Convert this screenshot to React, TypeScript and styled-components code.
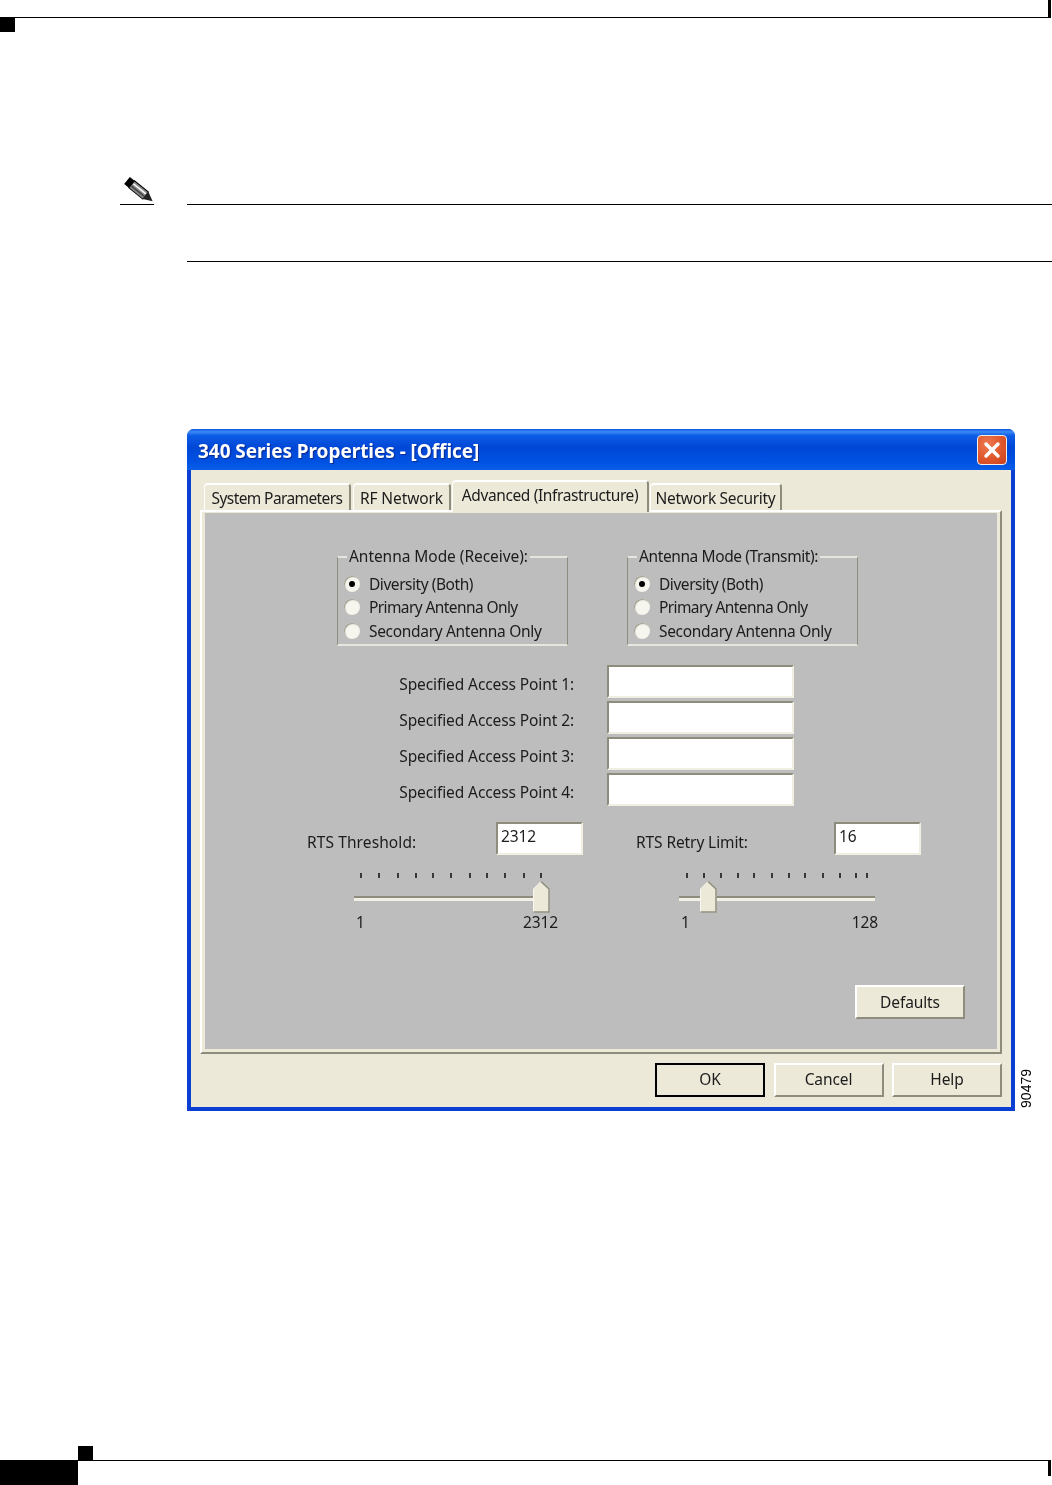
import React from 'react';
import styled, { createGlobalStyle } from 'styled-components';
import { X } from 'lucide-react';

const GlobalStyle = createGlobalStyle`
    html, body {
        margin: 0;
        padding: 0;
        background: #ffffff;
    }
    * {
        box-sizing: border-box;
    }
`;

const Page = styled.div`
    width: 1052px;
    height: 1485px;
    display: flex;
    flex-direction: column;
    overflow: hidden;
    background: #ffffff;
    font-family: "Noto Sans", "Liberation Sans", sans-serif;
    color: #1c1c1c;
`;

const TopBar = styled.div`
    display: flex;
    height: 33px;
    flex-shrink: 0;
`;

const TopMark = styled.div`
    width: 15px;
    height: 15px;
    margin-top: 17px;
    background: #000000;
`;

const TopRule = styled.div`
    flex: 1;
    height: 18px;
    margin-right: 1px;
    border-bottom: 1px solid #000000;
    border-right: 3px solid #000000;
`;

const NoteRow = styled.div`
    display: flex;
    margin: 144px 0 0 120px;
`;

const NoteIcon = styled.div`
    width: 34px;
    height: 28px;
    flex-shrink: 0;
    border-bottom: 1px solid #000000;
`;

const NoteBody = styled.div`
    flex: 1;
    height: 58px;
    margin: 27px 0 0 33px;
    border-top: 1px solid #000000;
    border-bottom: 1px solid #000000;
`;

const Figure = styled.div`
    display: flex;
    margin: 167px 0 0 187px;
`;

const Dialog = styled.div`
    width: 828px;
    height: 682px;
    display: flex;
    flex-direction: column;
    flex-shrink: 0;
    padding: 0 4px 4px;
    border-radius: 7px 7px 0 0;
    background: #0a3fd2;
    filter: blur(0.45px);
`;

const TitleBar = styled.div`
    height: 41px;
    margin: 0 -4px;
    padding: 3px 8px 0 11px;
    display: flex;
    align-items: center;
    justify-content: space-between;
    flex-shrink: 0;
    border-radius: 7px 7px 0 0;
    background: linear-gradient(180deg, #0a55e4 0%, #3d8bf5 7%, #0d5ce6 16%, #0047d6 45%, #0051e2 80%, #0a5ee8 100%);
`;

const TitleText = styled.span`
    font-family: "Noto Sans", sans-serif;
    font-weight: 700;
    font-size: 19px;
    letter-spacing: -0.05px;
    color: #ffffff;
    text-shadow: 1px 1px 1px #0a2a90;
`;

const CloseButton = styled.div`
    width: 30px;
    height: 30px;
    margin-top: -3px;
    display: flex;
    align-items: center;
    justify-content: center;
    border: 1px solid #f4efe8;
    border-radius: 4px;
    color: #ffffff;
    background: radial-gradient(circle at 35% 30%, #ee7a50 0%, #e0562c 55%, #c9401c 100%);
`;

const Body = styled.div`
    flex: 1;
    display: flex;
    flex-direction: column;
    padding: 0 9px;
    background: #ece9d8;
`;

const TabStrip = styled.div`
    height: 40px;
    flex-shrink: 0;
    display: flex;
    align-items: flex-start;
    padding-left: 4px;
`;

const Tab = styled.div<{ $width: number; $active?: boolean; $gap?: number; $track: number }>`
    position: relative;
    z-index: ${(props) => (props.$active ? 2 : 1)};
    width: ${(props) => props.$width}px;
    height: ${(props) => (props.$active ? 32 : 27)}px;
    margin-top: ${(props) => (props.$active ? 10 : 13)}px;
    margin-right: ${(props) => props.$gap ?? 0}px;
    display: flex;
    align-items: center;
    justify-content: center;
    padding-bottom: ${(props) => (props.$active ? 4 : 0)}px;
    font-size: 15.5px;
    letter-spacing: ${(props) => props.$track}px;
    white-space: nowrap;
    background: #ece9d8;
    border-top: 2px solid #ffffff;
    border-left: 1px solid #ffffff;
    border-right: 2px solid #8e8c7c;
    border-radius: 4px 4px 0 0;
`;

const Panel = styled.div`
    height: 544px;
    flex-shrink: 0;
    display: flex;
    padding: 1px 3px 3px;
    background: #ece9d8;
    border-top: 2px solid #ffffff;
    border-left: 2px solid #ffffff;
    border-right: 2px solid #8e8c7c;
    border-bottom: 2px solid #8e8c7c;
`;

const PanelInner = styled.div`
    flex: 1;
    display: flex;
    flex-direction: column;
    padding-top: 43px;
    padding-bottom: 30px;
    background: #bdbdbd;
    font-size: 15.5px;
    letter-spacing: -0.1px;
`;

const GroupRow = styled.div`
    display: flex;
    gap: 59px;
    padding-left: 132px;
`;

const GroupBox = styled.div`
    position: relative;
    width: 231px;
    height: 90px;
    padding: 14px 0 0 6px;
    border-top: 2px solid #e6e6de;
    border-left: 1.5px solid #8e8c7c;
    border-right: 1.5px solid #8e8c7c;
    border-bottom: 2px solid #e6e6de;
`;

const GroupTitle = styled.span<{ $track: number }>`
    position: absolute;
    top: -12px;
    left: 9px;
    padding: 0 2px;
    line-height: 20px;
    letter-spacing: ${(props) => props.$track}px;
    background: #bdbdbd;
    white-space: nowrap;
`;

const RadioRow = styled.div<{ $track: number }>`
    height: 23.5px;
    display: flex;
    align-items: center;
    gap: 9px;
    letter-spacing: ${(props) => props.$track}px;
    white-space: nowrap;
`;

const RadioDot = styled.span<{ $checked?: boolean }>`
    width: 16px;
    height: 16px;
    flex-shrink: 0;
    display: flex;
    align-items: center;
    justify-content: center;
    border-radius: 50%;
    background: #f6f5ee;
    box-shadow: inset 1px 1px 1px #9c9a8a;

    &::after {
        content: "";
        width: 6px;
        height: 6px;
        border-radius: 50%;
        background: ${(props) => (props.$checked ? '#000000' : 'transparent')};
    }
`;

const AccessGrid = styled.div`
    display: grid;
    grid-template-columns: 369px 187px;
    grid-auto-rows: 33px;
    column-gap: 33px;
    row-gap: 3px;
    margin-top: 19px;
    align-items: center;
`;

const AccessLabel = styled.span`
    padding-top: 5px;
    text-align: right;
    white-space: nowrap;
`;

const Field = styled.div<{ $width?: number }>`
    width: ${(props) => props.$width ?? 187}px;
    height: 33px;
    padding: 1px 0 0 3px;
    line-height: 22px;
    background: #ffffff;
    border-top: 2px solid #8e8c7c;
    border-left: 2px solid #8e8c7c;
    border-right: 2px solid #f1efe2;
    border-bottom: 2px solid #f1efe2;
`;

const RtsRow = styled.div`
    display: flex;
    margin-top: 16px;
    padding-left: 102px;
`;

const RtsBlock = styled.div<{ $width: number }>`
    width: ${(props) => props.$width}px;
    flex-shrink: 0;
`;

const RtsHead = styled.div<{ $width: number }>`
    width: ${(props) => props.$width}px;
    display: flex;
    align-items: center;
    justify-content: space-between;
`;

const RtsLabel = styled.span<{ $track: number }>`
    padding-top: 6px;
    letter-spacing: ${(props) => props.$track}px;
    white-space: nowrap;
`;

const Slider = styled.div<{ $left: number; $width: number }>`
    position: relative;
    margin: 18px 0 0 ${(props) => props.$left}px;
    width: ${(props) => props.$width}px;
`;

const TickScale = styled.svg`
    display: block;
    height: 5px;
    width: 100%;
`;

const Track = styled.div`
    height: 5px;
    margin-top: 18px;
    background: #f2f0e4;
    border-top: 2px solid #8e8c7c;
`;

const Thumb = styled.svg<{ $at: number }>`
    position: absolute;
    top: 8px;
    left: ${(props) => props.$at}px;
`;

const ScaleLabels = styled.div<{ $left: number; $width: number }>`
    display: flex;
    justify-content: space-between;
    margin: 11px 0 0 ${(props) => props.$left}px;
    width: ${(props) => props.$width}px;
    line-height: 20px;
`;

const DefaultsRow = styled.div`
    display: flex;
    justify-content: flex-end;
    margin-top: auto;
    padding-right: 32px;
`;

const Button = styled.div<{ $primary?: boolean }>`
    width: 110px;
    height: 34px;
    display: flex;
    align-items: center;
    justify-content: center;
    padding-bottom: 1px;
    background: #ece9d8;
    font-size: 15.5px;
    letter-spacing: -0.1px;
    border-top: 2px solid ${(props) => (props.$primary ? '#000000' : '#ffffff')};
    border-left: 2px solid ${(props) => (props.$primary ? '#000000' : '#ffffff')};
    border-right: 2px solid ${(props) => (props.$primary ? '#000000' : '#8e8c7c')};
    border-bottom: 2px solid ${(props) => (props.$primary ? '#000000' : '#8e8c7c')};
`;

const ButtonRow = styled.div`
    display: flex;
    justify-content: flex-end;
    gap: 8.5px;
    padding-top: 9px;

    ${Button} {
        padding-bottom: 3px;
    }
`;

const FigureNumber = styled.span`
    align-self: flex-end;
    margin: 0 0 3px 4px;
    writing-mode: vertical-rl;
    transform: rotate(180deg);
    font-family: "Liberation Sans", sans-serif;
    font-size: 14px;
    line-height: 15px;
    color: #000000;
`;

const Footer = styled.div`
    margin-top: auto;
    display: grid;
    grid-template-columns: 78px 15px 1fr;
    grid-template-rows: 14px 25px;
`;

const FooterBlock = styled.div`
    grid-column: 1;
    grid-row: 2;
    background: #000000;
`;

const FooterMark = styled.div`
    grid-column: 2;
    grid-row: 1;
    background: #000000;
`;

const FooterRule = styled.div`
    grid-column: 2 / -1;
    grid-row: 2;
    height: 16px;
    margin-right: 1px;
    border-top: 1px solid #000000;
    border-right: 3px solid #000000;
`;

const PencilIcon = () => (
    <svg width="34" height="27" viewBox="0 0 34 27">
        <g transform="translate(7 3.5) rotate(39)">
            <rect x="0" y="-4.5" width="6" height="9" fill="#000000" />
            <rect x="6" y="-4.5" width="18" height="9" fill="#8a8a8a" stroke="#000000" strokeWidth="1" />
            <line x1="7" y1="-1.5" x2="23" y2="-1.5" stroke="#ffffff" strokeWidth="1.5" />
            <line x1="7" y1="1.5" x2="23" y2="1.5" stroke="#444444" strokeWidth="1.5" />
            <polygon points="24,-4.5 33,0 24,4.5" fill="#222222" />
        </g>
    </svg>
);

const RadioGroup = ({ title, titleTrack }: { title: string; titleTrack: number }) => (
    <GroupBox>
        <GroupTitle $track={titleTrack}>{title}</GroupTitle>
        <RadioRow $track={-0.45}><RadioDot $checked />Diversity (Both)</RadioRow>
        <RadioRow $track={-0.6}><RadioDot />Primary Antenna Only</RadioRow>
        <RadioRow $track={-0.32}><RadioDot />Secondary Antenna Only</RadioRow>
    </GroupBox>
);

interface RtsProps {
    label: string;
    labelTrack: number;
    value: string;
    width: number;
    headWidth: number;
    left: number;
    trackWidth: number;
    ticks: number[];
    thumbAt: number;
    labelLeft: number;
    labelWidth: number;
    max: string;
}

const RtsControl = ({ label, labelTrack, value, width, headWidth, left, trackWidth, ticks, thumbAt, labelLeft, labelWidth, max }: RtsProps) => (
    <RtsBlock $width={width}>
        <RtsHead $width={headWidth}>
            <RtsLabel $track={labelTrack}>{label}</RtsLabel>
            <Field $width={87}>{value}</Field>
        </RtsHead>
        <Slider $left={left} $width={trackWidth}>
            <TickScale>
                {ticks.map((x) => (
                    <line key={x} x1={x} x2={x} y1="0" y2="5" stroke="#000000" strokeWidth="1.4" />
                ))}
            </TickScale>
            <Track />
            <Thumb $at={thumbAt} width="17" height="32" viewBox="0 0 17 32">
                <polygon points="8,0.5 16,8 16,31 0.5,31 0.5,8" fill="#ece9d8" stroke="#f8f7ef" strokeWidth="1" />
                <polyline points="8,0.5 16,8 16,31 0.5,31" fill="none" stroke="#8e8c7c" strokeWidth="1.5" />
            </Thumb>
        </Slider>
        <ScaleLabels $left={labelLeft} $width={labelWidth}>
            <span>1</span>
            <span>{max}</span>
        </ScaleLabels>
    </RtsBlock>
);

const App = () => (
    <Page>
        <GlobalStyle />
        <TopBar>
            <TopMark />
            <TopRule />
        </TopBar>

        <NoteRow>
            <NoteIcon><PencilIcon /></NoteIcon>
            <NoteBody />
        </NoteRow>

        <Figure>
            <Dialog>
                <TitleBar>
                    <TitleText>340 Series Properties - [Office]</TitleText>
                    <CloseButton><X size={24} strokeWidth={3.4} /></CloseButton>
                </TitleBar>
                <Body>
                    <TabStrip>
                        <Tab $width={147} $gap={2} $track={-0.6}>System Parameters</Tab>
                        <Tab $width={98} $gap={1} $track={-0.1}>RF Network</Tab>
                        <Tab $width={197} $gap={1} $track={-0.38} $active>Advanced (Infrastructure)</Tab>
                        <Tab $width={132} $track={-0.3}>Network Security</Tab>
                    </TabStrip>
                    <Panel>
                        <PanelInner>
                            <GroupRow>
                                <RadioGroup title="Antenna Mode (Receive):" titleTrack={-0.05} />
                                <RadioGroup title="Antenna Mode (Transmit):" titleTrack={-0.4} />
                            </GroupRow>
                            <AccessGrid>
                                {[1, 2, 3, 4].map((n) => (
                                    <React.Fragment key={n}>
                                        <AccessLabel>Specified Access Point {n}:</AccessLabel>
                                        <Field />
                                    </React.Fragment>
                                ))}
                            </AccessGrid>
                            <RtsRow>
                                <RtsControl
                                    label="RTS Threshold:"
                                    labelTrack={0.1}
                                    value="2312"
                                    width={329}
                                    headWidth={276}
                                    left={47}
                                    trackWidth={194}
                                    ticks={[7, 25, 44, 62, 79, 97, 116, 133, 151, 170, 187]}
                                    thumbAt={179}
                                    labelLeft={49}
                                    labelWidth={202}
                                    max="2312"
                                />
                                <RtsControl
                                    label="RTS Retry Limit:"
                                    labelTrack={-0.1}
                                    value="16"
                                    width={285}
                                    headWidth={285}
                                    left={43}
                                    trackWidth={196}
                                    ticks={[8, 25, 42, 59, 75, 93, 110, 126, 144, 161, 177, 188]}
                                    thumbAt={21}
                                    labelLeft={45}
                                    labelWidth={197}
                                    max="128"
                                />
                            </RtsRow>
                            <DefaultsRow>
                                <Button>Defaults</Button>
                            </DefaultsRow>
                        </PanelInner>
                    </Panel>
                    <ButtonRow>
                        <Button $primary>OK</Button>
                        <Button>Cancel</Button>
                        <Button>Help</Button>
                    </ButtonRow>
                </Body>
            </Dialog>
            <FigureNumber>90479</FigureNumber>
        </Figure>

        <Footer>
            <FooterBlock />
            <FooterMark />
            <FooterRule />
        </Footer>
    </Page>
);

export default App;
